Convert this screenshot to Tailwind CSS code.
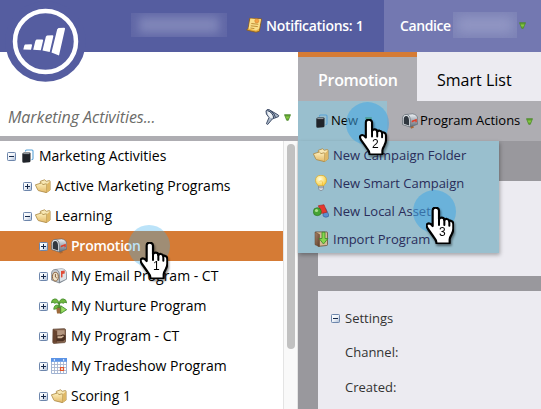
<!DOCTYPE html>
<html lang="en">
<head>
<meta charset="utf-8">
<title>Marketing Activities</title>
<script src="https://cdn.jsdelivr.net/npm/@tailwindcss/browser@4"></script>
</head>
<body class="w-[541px] h-[409px] overflow-hidden bg-white font-['Open_Sans',sans-serif] text-[14px] text-black">
<svg width="0" height="0" class="absolute">
  <defs>
    <linearGradient id="gBox" x1="0" y1="0" x2="1" y2="1"><stop offset="0" stop-color="#fff"/><stop offset=".5" stop-color="#eef2f8"/><stop offset="1" stop-color="#a9bad3"/></linearGradient>
    <linearGradient id="gFold" x1="0" y1="0" x2="0" y2="1"><stop offset="0" stop-color="#fdf0bd"/><stop offset="1" stop-color="#e3b968"/></linearGradient>
    <linearGradient id="gTri" x1="0" y1="0" x2="0" y2="1"><stop offset="0" stop-color="#4d8a2c"/><stop offset=".5" stop-color="#86c940"/><stop offset="1" stop-color="#589a2c"/></linearGradient>
    <linearGradient id="gMail" x1="0" y1="0" x2="0" y2="1"><stop offset="0" stop-color="#f1f4f7"/><stop offset=".45" stop-color="#a9b1ba"/><stop offset="1" stop-color="#666f79"/></linearGradient>
    <linearGradient id="gWood" x1="0" y1="0" x2="1" y2="1"><stop offset="0" stop-color="#a88468"/><stop offset="1" stop-color="#5d3d2b"/></linearGradient>
    <radialGradient id="gBulb" cx=".4" cy=".35" r=".7"><stop offset="0" stop-color="#fffde0"/><stop offset="1" stop-color="#f7cb35"/></radialGradient>
    <symbol id="plus" viewBox="0 0 9 9"><rect x=".5" y=".5" width="8" height="8" rx=".8" fill="url(#gBox)" stroke="#6d86ac"/><path d="M2 4.500h5M4.500 2v5" stroke="#15294c"/></symbol>
    <symbol id="minus" viewBox="0 0 9 9"><rect x=".5" y=".5" width="8" height="8" rx=".8" fill="url(#gBox)" stroke="#6d86ac"/><path d="M2 4.500h5" stroke="#15294c"/></symbol>
    <symbol id="tri" viewBox="0 0 7 7"><path d="M.5.700h6L4.300 6.300h-1.600z" fill="url(#gTri)" stroke="#4e8c2d" stroke-width=".8" stroke-linejoin="round"/></symbol>
    <symbol id="stack" viewBox="0 0 12 14"><path d="M3.500 2.500V2q0-1 1-1H10q1 0 1 1v7.500q0 1-1.500 1.200" fill="none" stroke="#59a3d8" stroke-width="1.100"/><path d="M2 3.500h5.500q1 0 1 1v7.300q0 1.200-1 1.400L1.700 13.800Q.3 13.800.3 12.500V5q0-1.400 1.700-1.500z" fill="#20242a"/><path d="M1.300 4.600h6.200" stroke="#cfd6dc" stroke-width=".7"/></symbol>
    <symbol id="folder" viewBox="0 0 16 16"><path d="M5.300 3.300 9.600 1.800l1.600 1.500 3-.7q.9 0 .9.900v8.600l-3.600 2.400-6-4z" fill="#f8e8b5" stroke="#a98641" stroke-width=".8" stroke-linejoin="round"/><path d="M.4 6.800 6.400 5l1.600 1.600 3-.8q.8 0 .8.700v7.200q0 .8-.8.800L3.700 12.700q-.8-.2-1-.9z" fill="url(#gFold)" stroke="#a98641" stroke-width=".8" stroke-linejoin="round"/><path d="m12 6 3-2.500v8.700l-3.300 2.200z" fill="#dfb866"/></symbol>
    <symbol id="mail" viewBox="0 0 16 16"><path d="m8 13 2.500-1.500 1.500 3-3 1.300z" fill="#ad6732"/><path d="M4 1.500 10.500.900Q15.700 1.600 15.700 6v5.200L8 14z" fill="url(#gMail)" stroke="#5d6670" stroke-width=".6"/><path d="M.5 6.300Q.5 1.500 4.200 1.500T8.200 6.800V14L.5 11.500z" fill="#e2e6ea" stroke="#59616a" stroke-width=".7"/><path d="M1.700 6.600q0-3.600 2.500-3.600T7 7v5.500l-5.300-1.700z" fill="#30373f"/><path d="M9.700 7.700 14.800 5.700v3.200l-1.300.5-.2-1.300-3.600 1.300z" fill="#df3f2a"/></symbol>
    <symbol id="email" viewBox="0 0 16 16"><path d="M4 1.500 10.500.700Q15.500 1.200 15.500 5.700v5.500L8.500 15z" fill="url(#gMail)" stroke="#717b86" stroke-width=".6"/><path d="M8.700 6.500Q8.600 3 7 1.500l4-.3q4 .8 4 4.500v5.200L8.700 14z" fill="#dde2e7"/><path d="M.4 6.500Q.4 1.500 4.200 1.500T8.400 6.800V15L.4 12z" fill="#c2c8ce" stroke="#737b84" stroke-width=".7"/><ellipse cx="4.400" cy="8.700" rx="2.900" ry="4.300" fill="#efe2c8" stroke="#8b6139"/><path d="M4.400 6v3l1.400 1" fill="none" stroke="#674323" stroke-width=".8"/><path d="M10 9.500V3l3.700-.6v3l-2.200.5v3.300z" fill="#e04b36"/></symbol>
    <symbol id="sprout" viewBox="0 0 16 16"><path d="M5 8.500h6l-1 7H6z" fill="#9c6a3c"/><path d="M8 10Q8.300 6.500 8 4.500" fill="none" stroke="#3f8b25" stroke-width="1.600"/><path d="M8 5.500Q7 .3 3.300 1 .7 1.300.4 4.900q1.800-1.400 3 .3Q5.500 4.200 8 5.500zM8 5.500Q9 .300 12.700 1q2.600.300 2.900 3.900-1.800-1.400-3 .3Q10.500 4.200 8 5.500z" fill="#70b83f" stroke="#3d8728" stroke-width=".8"/><path d="M7.600 7.300Q3 6 2.700 11.300 6.600 11.600 7.600 7.300z" fill="#70b83f" stroke="#3d8728" stroke-width=".7"/><path d="m9.700 7.700 6 4-6 3.800z" fill="#9add61" stroke="#348326" stroke-width=".8"/></symbol>
    <symbol id="program" viewBox="0 0 16 16"><path d="M2 1.200 13.300.700q1.200 0 1.200 1.200v11.500q0 1-1 1.200L3 15.400q-1.200 0-1.200-1.100z" fill="#8b6a53" stroke="#513524" stroke-width=".7"/><path d="M2.200 1.500 6 3.300v11.500L2 14.500z" fill="#67432e"/><path d="M6.300 2.300h7.200v4.500l-3.500.7H6.300z" fill="#b39680"/><path d="M5.500 7.500h4l2.500-1.300 2.500 1.300v3.800L12 13.300H5.500z" fill="#4b3022"/><path d="M6.500 8.300h3.800l1.700-.9 1 .8-2.500 2.100H6.500z" fill="#d3b79b"/></symbol>
    <symbol id="calendar" viewBox="0 0 16 16"><path d="M.5.500h15v15H.5z" fill="#fff" stroke="#9fb3d3"/><path d="M0 0h16v3.800H0z" fill="#5b93e5"/><path d="m2.300 1.900 1.700-1v2zM13.700 1.900l-1.700-1v2z" fill="#fff"/><path d="M3.500 4v11.500M6.500 4v11.500M9.500 4v11.500M12.500 4v11.500M.5 6.500h15M.5 9.500h15M.5 12.500h15" stroke="#a8b6cf" stroke-width=".9"/><path d="M9.500 9.500h3v3h-3z" fill="#ffe3d5" stroke="#e3552c" stroke-width="1.200"/></symbol>
    <symbol id="bulb" viewBox="0 0 16 16"><path d="M8 .3q5.500 0 5.500 5.200 0 2.200-1.800 3.900-1 1-.9 1.800H5.200q.1-.8-.9-1.800Q2.500 7.700 2.500 5.500 2.500.3 8 .300z" fill="url(#gBulb)" stroke="#d9a528" stroke-width=".7"/><path d="m6.500 7 1.500-1.500L9.500 7v4" fill="none" stroke="#f3b62b" stroke-width=".6"/><path d="M5.500 11.200h5v2.600q-1 1.900-2.500 1.900t-2.500-1.900z" fill="#d5d9df" stroke="#707985" stroke-width=".6"/><path d="M5.500 12.700h5" stroke="#7c8490" stroke-width=".7"/></symbol>
    <symbol id="asset" viewBox="0 0 16 16"><path d="m12.700 5.500 3.200 6.500q.2 2-3 2.200-3-.3-3-2.200z" fill="#5d8fce" stroke="#2b5692" stroke-width=".6"/><path d="m5.300 2.700 5.700-1 3 7.500-5.500 1.300z" fill="#e6372e" stroke="#a02420" stroke-width=".6"/><circle cx="4.300" cy="8.700" r="4" fill="#46a333" stroke="#286f20" stroke-width=".6"/><circle cx="3.500" cy="7.500" r="1.600" fill="#a9df8d"/></symbol>
    <symbol id="import" viewBox="0 0 16 16"><path d="M2.500.900h11q1 0 1 1V13.500q0 1-1 1L5 15.400z" fill="#d4bb93" stroke="#5e402b" stroke-width=".7"/><path d="M2 1 6.500 3.500v12L2 13.700z" fill="url(#gWood)" stroke="#5e402b" stroke-width=".5"/><path d="M9 1.200h3v6.300h2.900l-4.400 5.500L6.100 7.500H9z" fill="#86d74b" stroke="#37882a" stroke-width=".8"/></symbol>
    <symbol id="note" viewBox="0 0 16 16"><path d="M3.700 1.300 15.500 1.900 13.300 14.300 10 15.200.600 13q2-1 2.200-5z" fill="#e9b244" stroke="#8e5c15" stroke-width=".8"/><path d="M4.400 1.500 15 2.300l-1.900 9.500L10 13.500 2.500 11.500z" fill="#fae08c"/><path d="m5.300 6.500 7 .8M4.800 8.800l7 .8M4.400 11l4 .6" stroke="#b8842d" stroke-width=".9"/><circle cx="10.800" cy="3.900" r="2" fill="#f3a344" stroke="#dc8a34" stroke-width=".7"/></symbol>
    <symbol id="hand" viewBox="0 0 84 111"><path d="M20 10Q20 2 29 2t10 8v27q2-5 8-5 7 0 8 7 3-4 8-3 6 1 7 7 2-3 6-1 6 2 6 9v14q0 8-5 17-5 8-6 15v10q0 3-3 3H34q-3 0-3-4 0-6-8-16L6 66Q-1 55 4 51q7-5 16 6z" fill="#fff" stroke="#000" stroke-width="6.500" stroke-linejoin="round"/><path d="M39 36v18M55 39v15M70 44v12" stroke="#000" stroke-width="6" stroke-linecap="round"/></symbol>
  </defs>
</svg>

<div class="relative flex h-[409px] w-[541px] flex-col">
  <header class="flex h-[52px] shrink-0 bg-[#555da0] font-semibold text-white">
    <div class="flex w-[384px] items-center pl-[131px] pb-[2px]">
      <div class="h-6 w-24 overflow-hidden bg-[#6067a6]"><div class="mx-2 mt-1 h-4 bg-[#8086b9] blur-[5px]"></div></div>
      <svg class="ml-[19px] h-4 w-4"><use href="#note"/></svg>
      <span class="ml-1 whitespace-nowrap tracking-[-0.3px]">Notifications: 1</span>
    </div>
    <div class="flex flex-1 items-center bg-[#7378b1] pb-[2px] pl-4">
      <span class="w-[53px] tracking-[-0.4px]">Candice</span>
      <div class="h-[26px] w-16 overflow-hidden bg-[#7c82b6]"><div class="mx-1 mt-[5px] h-4 bg-[#9297c4] blur-[6px]"></div></div>
      <svg class="ml-[2px] h-[7px] w-[7px]"><use href="#tri"/></svg>
    </div>
  </header>

  <div class="flex min-h-0 flex-1">
    <aside class="flex w-[298px] shrink-0 flex-col">
      <div class="flex h-[84px] items-end pb-[7px] pl-2 pr-[7px]">
        <span class="flex-1 text-[16px] italic leading-6 tracking-[-0.05px] text-[#6b6b68]">Marketing Activities...</span>
        <svg class="mb-1 h-4 w-[15px]" viewBox="0 0 15 16"><path d="M1 2Q1.500 0 4 .600L13.300 6q1 .9 0 1.700L7.300 10 2.700 15.500l-1.300-.8L4 8.500Q.3 5 1 2z" fill="#aab7c7" stroke="#34425e" stroke-width=".9"/><path d="M2.500 2.300Q7 3.500 8.700 8.500L5.500 9Q2 6 2.500 2.300z" fill="#eef2f6"/><path d="M2.500 1.500Q8 3.500 8.700 9M5.300 1.700Q10 4.500 10.500 8.500" fill="none" stroke="#33415d" stroke-width="1"/></svg>
        <svg class="ml-1 mb-2 h-[7px] w-[7px]"><use href="#tri"/></svg>
      </div>
      <div class="h-[5px] shrink-0 bg-[#aeadb2]"></div>
      <div class="flex min-h-0 flex-1">
        <nav class="w-[283px] overflow-hidden leading-[30px] whitespace-nowrap">
          <div class="flex h-[30px] items-center pl-[7px]"><svg class="h-[9px] w-[9px]"><use href="#minus"/></svg><svg class="ml-[6px] h-[14px] w-3"><use href="#stack"/></svg><span class="ml-[5px]">Marketing Activities</span></div>
          <div class="flex h-[30px] items-center pl-[23px]"><svg class="h-[9px] w-[9px]"><use href="#plus"/></svg><svg class="ml-[3px] h-4 w-4"><use href="#folder"/></svg><span class="ml-1">Active Marketing Programs</span></div>
          <div class="flex h-[30px] items-center pl-[23px]"><svg class="h-[9px] w-[9px]"><use href="#minus"/></svg><svg class="ml-[3px] h-4 w-4"><use href="#folder"/></svg><span class="ml-1">Learning</span></div>
          <div class="flex h-[30px] items-center bg-[#d57b35] pl-[39px] font-semibold text-white"><svg class="h-[9px] w-[9px]"><use href="#plus"/></svg><svg class="ml-[3px] h-4 w-4"><use href="#mail"/></svg><span class="ml-1 tracking-[-0.25px]">Promotion</span></div>
          <div class="flex h-[30px] items-center pl-[39px]"><svg class="h-[9px] w-[9px]"><use href="#plus"/></svg><svg class="ml-[3px] h-4 w-4"><use href="#email"/></svg><span class="ml-1">My Email Program - CT</span></div>
          <div class="flex h-[30px] items-center pl-[39px]"><svg class="h-[9px] w-[9px]"><use href="#plus"/></svg><svg class="ml-[3px] h-4 w-4"><use href="#sprout"/></svg><span class="ml-1">My Nurture Program</span></div>
          <div class="flex h-[30px] items-center pl-[39px]"><svg class="h-[9px] w-[9px]"><use href="#plus"/></svg><svg class="ml-[3px] h-4 w-4"><use href="#program"/></svg><span class="ml-1">My Program - CT</span></div>
          <div class="flex h-[30px] items-center pl-[39px]"><svg class="h-[9px] w-[9px]"><use href="#plus"/></svg><svg class="ml-[3px] h-4 w-4"><use href="#calendar"/></svg><span class="ml-1">My Tradeshow Program</span></div>
          <div class="flex h-[30px] items-center pl-[39px]"><svg class="h-[9px] w-[9px]"><use href="#plus"/></svg><svg class="ml-[3px] h-4 w-4"><use href="#folder"/></svg><span class="ml-1">Scoring 1</span></div>
        </nav>
        <div class="w-[15px] border-x border-[#e4e4e4] bg-[#f9f9f9] pl-[3px] pt-[3px]"><div class="h-[205px] w-2 rounded-full bg-[#c1c1c1]"></div></div>
      </div>
    </aside>

    <main class="relative flex flex-1 flex-col bg-[#99989d]">
      <div class="flex h-[49px] shrink-0 bg-[#ecebf1] text-[16px]">
        <div class="w-[119px] border-t-[5px] border-[#d57b35] bg-[#aeadb2] pl-5 font-semibold leading-[46px] tracking-[-0.3px] text-white">Promotion</div>
        <div class="pl-5 pt-[5px] leading-[46px]">Smart List</div>
      </div>
      <div class="flex h-10 shrink-0 bg-[#aeadb2] text-[13px]">
        <div class="flex w-[89px] items-center bg-[#99bfce] pl-[18px]"><svg class="h-[14px] w-3"><use href="#stack"/></svg><span class="ml-[3px] w-[27px]">New</span><svg class="mb-[2px] ml-[7px] h-[7px] w-[7px]"><use href="#tri"/></svg></div>
        <div class="flex flex-1 items-center pl-[15px]"><svg class="h-4 w-4"><use href="#mail"/></svg><span class="ml-[2px] w-[101px] whitespace-nowrap">Program Actions</span><svg class="ml-[5px] h-[7px] w-[7px]"><use href="#tri"/></svg></div>
      </div>
      <section class="ml-5 mt-10 h-[95px] shrink-0 bg-[#ecebf1]"></section>
      <section class="ml-5 mt-[15px] flex-1 bg-[#ecebf1] pl-[13px] pt-[10px] text-[13px] leading-[35px] text-[#333]">
        <div class="flex h-[34px] items-center"><svg class="mr-[5px] h-[9px] w-[9px]"><use href="#minus"/></svg>Settings</div>
        <div class="pl-[14px]">Channel:</div>
        <div class="pl-[14px]">Created:</div>
      </section>
      <div class="absolute left-0 top-[89px] h-28 w-[201px] bg-[#99bfce] pl-[15px] text-[13px] leading-7 text-[#292d5a] shadow-[1px_2px_4px_rgba(0,0,0,0.3)]">
        <div class="flex h-7 items-center"><svg class="mr-1 h-4 w-4"><use href="#folder"/></svg>New Campaign Folder</div>
        <div class="flex h-7 items-center"><svg class="mr-1 h-4 w-4"><use href="#bulb"/></svg>New Smart Campaign</div>
        <div class="flex h-7 items-center"><svg class="mr-1 h-4 w-4"><use href="#asset"/></svg>New Local Asset</div>
        <div class="flex h-7 items-center"><svg class="mr-1 h-4 w-4"><use href="#import"/></svg>Import Program</div>
      </div>
    </main>
  </div>

  <svg class="absolute left-[5px] top-[1px]" width="81" height="81" viewBox="0 0 81 81"><circle cx="40.500" cy="40.500" r="40.300" fill="#555da0"/><circle cx="40.500" cy="40.500" r="30.500" fill="none" stroke="#fff" stroke-width="4.500"/><path d="m20 43.500 6-.2q1.300 0 1 1.200l-1 4.200-7.700-.1 1-4.100zM31.500 38.600l5.500-.2q1.400 0 1.100 1.200l-2.300 9.700-7.600-.6 2.200-9zM42 34.400l5.300-.2q1.300 0 1 1.200L44.700 51l-7.200-1.500 3.400-14.100zM53.500 27l5.500-.2q1.300 0 1 1.300L54 54.500l-7.500-3.100 5.700-23.200z" fill="#fff"/></svg>

  <div class="absolute left-[128px] top-[225px] size-[42px] rounded-full bg-[#3dafef]/35"></div>
  <div class="absolute left-[346px] top-[102px] size-[43px] rounded-full bg-[#43a8e4]/55"></div>
  <div class="absolute left-[413px] top-[190px] size-[43px] rounded-full bg-[#43a8e4]/55"></div>
  <div class="absolute left-[140px] top-[242px] h-[37px] w-7 drop-shadow-[1px_2px_1px_rgba(0,0,0,0.45)]"><svg class="h-full w-full overflow-visible"><use href="#hand"/></svg><span class="absolute left-[13px] top-[17px] font-['Liberation_Sans',sans-serif] text-[12px] leading-[14px]">1</span></div>
  <div class="absolute left-[359px] top-[119px] h-[36px] w-7 drop-shadow-[1px_2px_1px_rgba(0,0,0,0.45)]"><svg class="h-full w-full overflow-visible"><use href="#hand"/></svg><span class="absolute left-[13px] top-[18px] font-['Liberation_Sans',sans-serif] text-[12px] leading-[14px]">2</span></div>
  <div class="absolute left-[426px] top-[207px] h-[37px] w-7 drop-shadow-[1px_2px_1px_rgba(0,0,0,0.45)]"><svg class="h-full w-full overflow-visible"><use href="#hand"/></svg><span class="absolute left-[13px] top-[18px] font-['Liberation_Sans',sans-serif] text-[12px] leading-[14px]">3</span></div>
</div>
</body>
</html>
